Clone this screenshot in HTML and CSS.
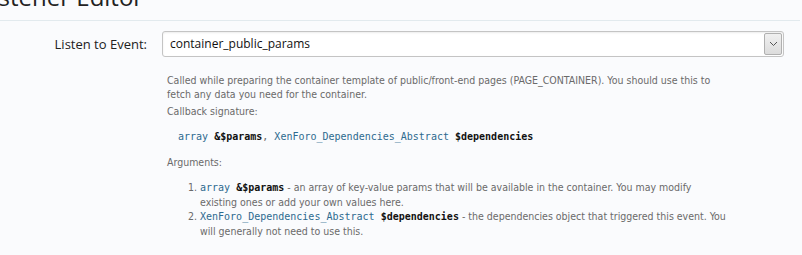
FILE: index.html
```html
<!DOCTYPE html>
<html lang="en">
<head>
  <meta charset="UTF-8" />
  <title>Listener Editor</title>
  <link rel="stylesheet" href="styles.css">
</head>
<body>
  <div class="titleBar">
    <h1>Listener Editor</h1>
  </div>

  <div class="formRow">
    <label class="rowLabel" for="event">Listen to Event:</label>
    <div class="rowInput">
      <div class="selectBox">
        <span class="selectValue">container_public_params</span>
        <span class="selectArrow">
          <svg width="9" height="6" viewBox="0 0 9 6"><path d="M1 1 L4.5 4.5 L8 1" fill="none" stroke="#555" stroke-width="1"/></svg>
        </span>
      </div>

      <div class="explain">
        <p>Called while preparing the container template of public/front-end pages (PAGE_CONTAINER). You should use this to<br>fetch any data you need for the container.</p>
        <p>Callback signature:</p>
        <p class="sig"><code><span class="type">array</span> <b>&amp;$params</b>, <span class="type">XenForo_Dependencies_Abstract</span> <b>$dependencies</b></code></p>
        <p>Arguments:</p>
        <ol>
          <li><code><span class="type">array</span> <b>&amp;$params</b></code> - an array of key-value params that will be available in the container. You may modify<br>existing ones or add your own values here.</li>
          <li><code><span class="type">XenForo_Dependencies_Abstract</span> <b>$dependencies</b></code> - the dependencies object that triggered this event. You<br>will generally not need to use this.</li>
        </ol>
      </div>
    </div>
  </div>
</body>
</html>
```

FILE: styles.css
```css
body {
  margin: 0;
  background-color: #fafbfd;
  font-family: 'Open Sans', 'Noto Sans', sans-serif;
  color: #333;
  overflow: hidden;
}

.titleBar {
  height: 20px;
  border-bottom: 1px solid #e2eaee;
  overflow: hidden;
  margin-right: 2px;
}

h1 {
  margin: -17px 0 0 -20px;
  font-size: 24px;
  font-weight: normal;
  line-height: 28px;
  color: #222;
  white-space: nowrap;
}

.formRow {
  display: flex;
  padding-top: 10px;
}

.rowLabel {
  width: 162px;
  text-align: right;
  font-size: 13px;
  line-height: 26px;
  color: #222;
  padding-right: 15px;
  box-sizing: border-box;
}

.rowInput {
  width: 622px;
}

.selectBox {
  display: flex;
  height: 26px;
  border: 1px solid #c4c4c4;
  border-radius: 3px;
  background-color: #fff;
  box-sizing: border-box;
  box-shadow: inset 0 1px 2px rgba(0, 0, 0, 0.08);
}

.selectValue {
  flex: 1;
  padding-left: 7px;
  font-size: 12px;
  line-height: 24px;
  color: #111;
}

.selectArrow {
  width: 16px;
  margin: 1px;
  display: flex;
  align-items: center;
  justify-content: center;
  background: linear-gradient(#f0f0f0, #dcdcdc);
  border: 1px solid #b0b0b0;
  border-radius: 2px;
}

.explain {
  padding-left: 5px;
  padding-top: 16px;
  font-family: 'DejaVu Sans Condensed', 'DejaVu Sans', sans-serif;
  font-size: 10.5px;
  line-height: 14px;
  color: #6a6a6a;
  white-space: nowrap;
}

.explain p {
  margin: 0 0 3px;
}

.explain p.sig {
  padding-left: 11px;
  margin: 11px 0;
}

code {
  font-family: 'DejaVu Sans Mono', 'Liberation Mono', monospace;
  font-size: 10px;
}

code .type {
  color: #2d6a8f;
}

code b {
  color: #111;
}

ol {
  margin: 11px 0 0;
  padding-left: 33px;
}
```
